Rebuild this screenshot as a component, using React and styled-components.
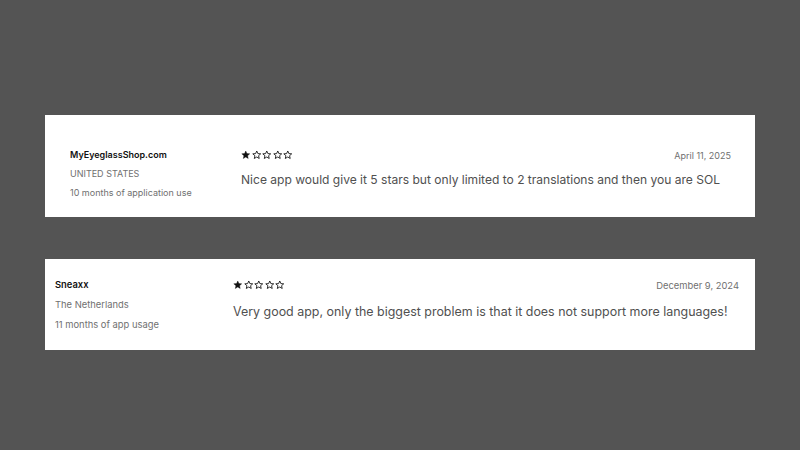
import React from 'react'
import styled, { createGlobalStyle } from 'styled-components'

const GlobalStyle = createGlobalStyle`
  html, body {
    margin: 0;
    padding: 0;
    background: #545454;
    font-family: Inter, "Noto Sans", sans-serif;
  }
`

const Page = styled.div`
  width: 800px;
  height: 450px;
  padding: 115px 45px 0 45px;
  box-sizing: border-box;
  display: flex;
  flex-direction: column;
  gap: 42px;
`

const Card = styled.div`
  background: #fff;
  display: flex;
  padding: ${props => props.pad};
`

const Author = styled.div`
  width: ${props => props.w}px;
  flex-shrink: 0;
  display: flex;
  flex-direction: column;
  gap: ${props => props.gap}px;
`

const Name = styled.div`
  font-size: ${props => props.size}px;
  font-weight: 600;
  color: #111;
  line-height: 14px;
`

const Meta = styled.div`
  font-size: ${props => props.size}px;
  color: #707070;
  line-height: 14px;
`

const Body = styled.div`
  flex: 1;
  display: flex;
  flex-direction: column;
  gap: ${props => props.gap}px;
`

const TopRow = styled.div`
  display: flex;
  justify-content: space-between;
  align-items: center;
  height: 14px;
`

const Stars = styled.div`
  display: flex;
  gap: 1px;
`

const DateText = styled.div`
  font-size: ${props => props.size}px;
  color: #707070;
`

const Text = styled.p`
  margin: 0;
  font-size: ${props => props.size}px;
  color: #505050;
  line-height: 20px;
  white-space: nowrap;
`

const Star = ({ filled }) => (
  <svg width="9.5" height="9.5" viewBox="0 0 24 24">
    <path
      d="M12 2.5l2.9 6.6 7.1.6-5.4 4.7 1.6 7-6.2-3.7-6.2 3.7 1.6-7L2 9.7l7.1-.6z"
      fill={filled ? '#111' : 'none'}
      stroke="#111"
      strokeWidth={filled ? 1 : 2.2}
      strokeLinejoin="round"
    />
  </svg>
)

const Rating = ({ value }) => (
  <Stars>
    {[1, 2, 3, 4, 5].map(i => <Star key={i} filled={i <= value} />)}
  </Stars>
)

const reviews = [
  {
    name: 'MyEyeglassShop.com',
    country: 'UNITED STATES',
    usage: '10 months of application use',
    date: 'April 11, 2025',
    text: 'Nice app would give it 5 stars but only limited to 2 translations and then you are SOL',
    pad: '33px 24px 17px 25px',
    colW: 171,
    small: 9,
    big: 12.05,
    gap: 5,
    bodyGap: 8,
  },
  {
    name: 'Sneaxx',
    country: 'The Netherlands',
    usage: '11 months of app usage',
    date: 'December 9, 2024',
    text: 'Very good app, only the biggest problem is that it does not support more languages!',
    pad: '19px 16px 18px 10px',
    colW: 178,
    small: 9.4,
    big: 12.45,
    gap: 6,
    bodyGap: 10,
  },
]

const App = () => (
  <>
    <GlobalStyle />
    <Page>
      {reviews.map(r => (
        <Card key={r.name} pad={r.pad}>
          <Author w={r.colW} gap={r.gap}>
            <Name size={r.small}>{r.name}</Name>
            <Meta size={r.small}>{r.country}</Meta>
            <Meta size={r.small}>{r.usage}</Meta>
          </Author>
          <Body gap={r.bodyGap}>
            <TopRow>
              <Rating value={1} />
              <DateText size={r.small}>{r.date}</DateText>
            </TopRow>
            <Text size={r.big}>{r.text}</Text>
          </Body>
        </Card>
      ))}
    </Page>
  </>
)

export default App
